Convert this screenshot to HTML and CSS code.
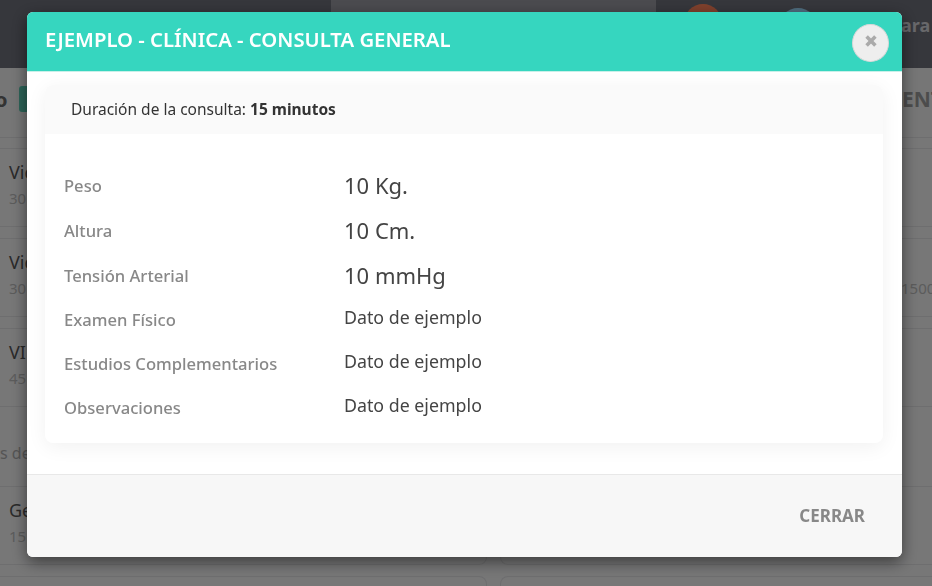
FILE: index.html

```html
<html lang="es">
<head>
    <meta name="viewport" content="width=device-width">
    <title>Consulta</title>
    <link rel="stylesheet" href="styles.css">
</head>
<body>

<div class="page">
    <div class="topbar">
        <div class="search"></div>
        <div class="avatar avatar-orange"></div>
        <div class="avatar avatar-blue"></div>
        <div class="username">Clara</div>
    </div>

    <div class="subbar">
        <div class="subbar-title">o</div>
        <div class="subbar-tag"></div>
        <div class="subbar-right">ENT</div>
    </div>

    <div class="list-top"></div>

    <div class="list">
        <div class="card card-left">
            <div class="card-title">Videoconsulta</div>
            <div class="card-sub">30 minutos</div>
        </div>
        <div class="card card-right"></div>
        <div class="card card-left">
            <div class="card-title">Videoconsulta</div>
            <div class="card-sub">30 minutos</div>
        </div>
        <div class="card card-right">
            <div class="card-price">1500</div>
        </div>
        <div class="card card-left">
            <div class="card-title">VIP</div>
            <div class="card-sub">45 minutos</div>
        </div>
        <div class="card card-right"></div>
        <div class="list-label">s de ejemplo</div>
        <div class="card card-left">
            <div class="card-title">General</div>
            <div class="card-sub">15 minutos</div>
        </div>
        <div class="card card-right"></div>
        <div class="card card-left"></div>
        <div class="card card-right"></div>
    </div>
</div>

<div class="overlay">
    <div class="modal">
        <div class="modal-header">
            <div class="modal-title">EJEMPLO - CLÍNICA - CONSULTA GENERAL</div>
            <button class="close-button" aria-label="Cerrar">
                <svg class="close-icon" viewBox="0 0 14 14">
                    <path d="M2.6 2.6 11.4 11.4M11.4 2.6 2.6 11.4"></path>
                </svg>
            </button>
        </div>

        <div class="modal-body">
            <div class="info-card">
                <div class="info-head">Duración de la consulta: <b>15 minutos</b></div>
                <div class="info-rows">
                    <div class="info-label">Peso</div>
                    <div class="info-value big">10 Kg.</div>
                    <div class="info-label">Altura</div>
                    <div class="info-value big">10 Cm.</div>
                    <div class="info-label">Tensión Arterial</div>
                    <div class="info-value big">10 mmHg</div>
                    <div class="info-label">Examen Físico</div>
                    <div class="info-value">Dato de ejemplo</div>
                    <div class="info-label">Estudios Complementarios</div>
                    <div class="info-value">Dato de ejemplo</div>
                    <div class="info-label">Observaciones</div>
                    <div class="info-value">Dato de ejemplo</div>
                </div>
            </div>
        </div>

        <div class="modal-footer">
            <button class="footer-button">CERRAR</button>
        </div>
    </div>
</div>

</body>
</html>
```

FILE: styles.css

```css
body {
    margin: 0;
    padding: 0;
    overflow: hidden;
    height: 586px;
    background: #eeeeef;
    font-family: "Noto Sans", "Liberation Sans", sans-serif;
    color: #333;
}

.page {
    height: 586px;
    overflow: hidden;
}

/* page behind the dialog */
.topbar {
    display: flex;
    height: 68px;
    background: #6c6e78;
    overflow: hidden;
}

.search {
    flex: none;
    width: 325px;
    height: 40px;
    margin-left: 331px;
    background: #97979f;
    border-radius: 0 0 8px 8px;
}

.avatar {
    flex: none;
    width: 38px;
    height: 38px;
    border-radius: 50%;
}

.avatar-orange {
    margin: 4px 0 0 28px;
    background: #ff825a;
}

.avatar-blue {
    margin: 8px 0 0 57px;
    background: #9edafe;
}

.username {
    flex: none;
    margin: 13px 0 0 67px;
    font-size: 18px;
    font-weight: 700;
    color: #d0d0d6;
}

.subbar {
    display: flex;
    align-items: center;
    height: 62px;
    background: #eceded;
    overflow: hidden;
}

.subbar-title {
    flex: none;
    width: 24px;
    margin-left: -5px;
    font-size: 20px;
    font-weight: 700;
    color: #666;
}

.subbar-tag {
    flex: none;
    width: 60px;
    height: 26px;
    background: #5ac8b0;
    border-radius: 3px;
}

.subbar-right {
    flex: none;
    margin-left: 823px;
    font-size: 21px;
    font-weight: 700;
    color: #999;
}

.list-top {
    height: 7px;
    margin-bottom: 10px;
    border-bottom: 1px solid #dcdcde;
}

.list {
    display: grid;
    grid-template-columns: 487px 1fr;
    grid-template-rows: 79px 79px 79px 57px 79px 79px;
    column-gap: 13px;
    row-gap: 11px;
}

.card {
    box-sizing: border-box;
    padding: 11px 0 0 9px;
    border: 1px solid #dcdcde;
}

.card-left {
    border-left: none;
    border-radius: 0 8px 8px 0;
}

.card-right {
    border-right: none;
    border-radius: 8px 0 0 8px;
}

.card-title {
    font-size: 18px;
    line-height: 24px;
    color: #555;
}

.card-sub {
    margin-top: 4px;
    font-size: 15px;
    color: #b8b8b8;
}

.card-price {
    margin: 28px 0 0 391px;
    font-size: 15px;
    color: #b8b8b8;
}

.list-label {
    grid-column: 1 / 3;
    padding-top: 24px;
    font-size: 16px;
    color: #aaa;
}

/* dialog */
.overlay {
    position: fixed;
    top: 0;
    left: 0;
    width: 100%;
    height: 100%;
    background: rgba(0, 0, 0, 0.5);
}

.modal {
    width: 875px;
    margin: 12px 0 0 27px;
    background: #fff;
    border-radius: 6px;
    overflow: hidden;
    box-shadow: 0 5px 15px rgba(0, 0, 0, 0.5);
}

.modal-header {
    display: flex;
    justify-content: space-between;
    height: 59px;
    padding: 0 13px 0 18px;
    background: #36d6bf;
    border-bottom: 1px solid #c8f0e9;
}

.modal-title {
    padding-top: 13px;
    font-size: 20.3px;
    font-weight: 600;
    color: #fff;
}

.close-button {
    width: 37px;
    height: 38px;
    margin-top: 12px;
    padding: 0;
    background: #eee;
    border: 1px solid #d8d8d8;
    border-radius: 50%;
}

.close-icon {
    display: block;
    width: 14px;
    height: 14px;
    margin: -4px auto 0;
    fill: none;
    stroke: #aaa;
    stroke-width: 3.6;
}

.modal-body {
    padding: 13px 19px 31px 18px;
}

.info-card {
    border-radius: 8px;
    overflow: hidden;
    box-shadow: 0 4px 20px rgba(0, 0, 0, 0.06);
}

.info-head {
    height: 49px;
    padding: 13px 0 0 26px;
    box-sizing: border-box;
    background: #fafafa;
    font-size: 15.5px;
}

.info-rows {
    display: grid;
    grid-template-columns: 280px 1fr;
    grid-template-rows: 45px 45px 44px 44px 44px 44px;
    padding: 31px 0 12px 19px;
}

.info-label {
    padding-top: 9px;
    box-sizing: border-box;
    font-size: 16.6px;
    font-weight: 500;
    color: #888;
}

.info-value {
    font-size: 17.8px;
    color: #444;
    padding-top: 6px;
    box-sizing: border-box;
}

.info-value.big {
    font-size: 22px;
    padding-top: 5px;
}

.modal-footer {
    display: flex;
    justify-content: flex-end;
    align-items: center;
    height: 83px;
    padding: 0 37px 2px 0;
    box-sizing: border-box;
    background: #f7f7f7;
    border-top: 1px solid #e8e8e8;
}

.footer-button {
    padding: 0;
    background: none;
    border: none;
    font-family: inherit;
    font-size: 17px;
    font-weight: 700;
    color: #888;
}
```
